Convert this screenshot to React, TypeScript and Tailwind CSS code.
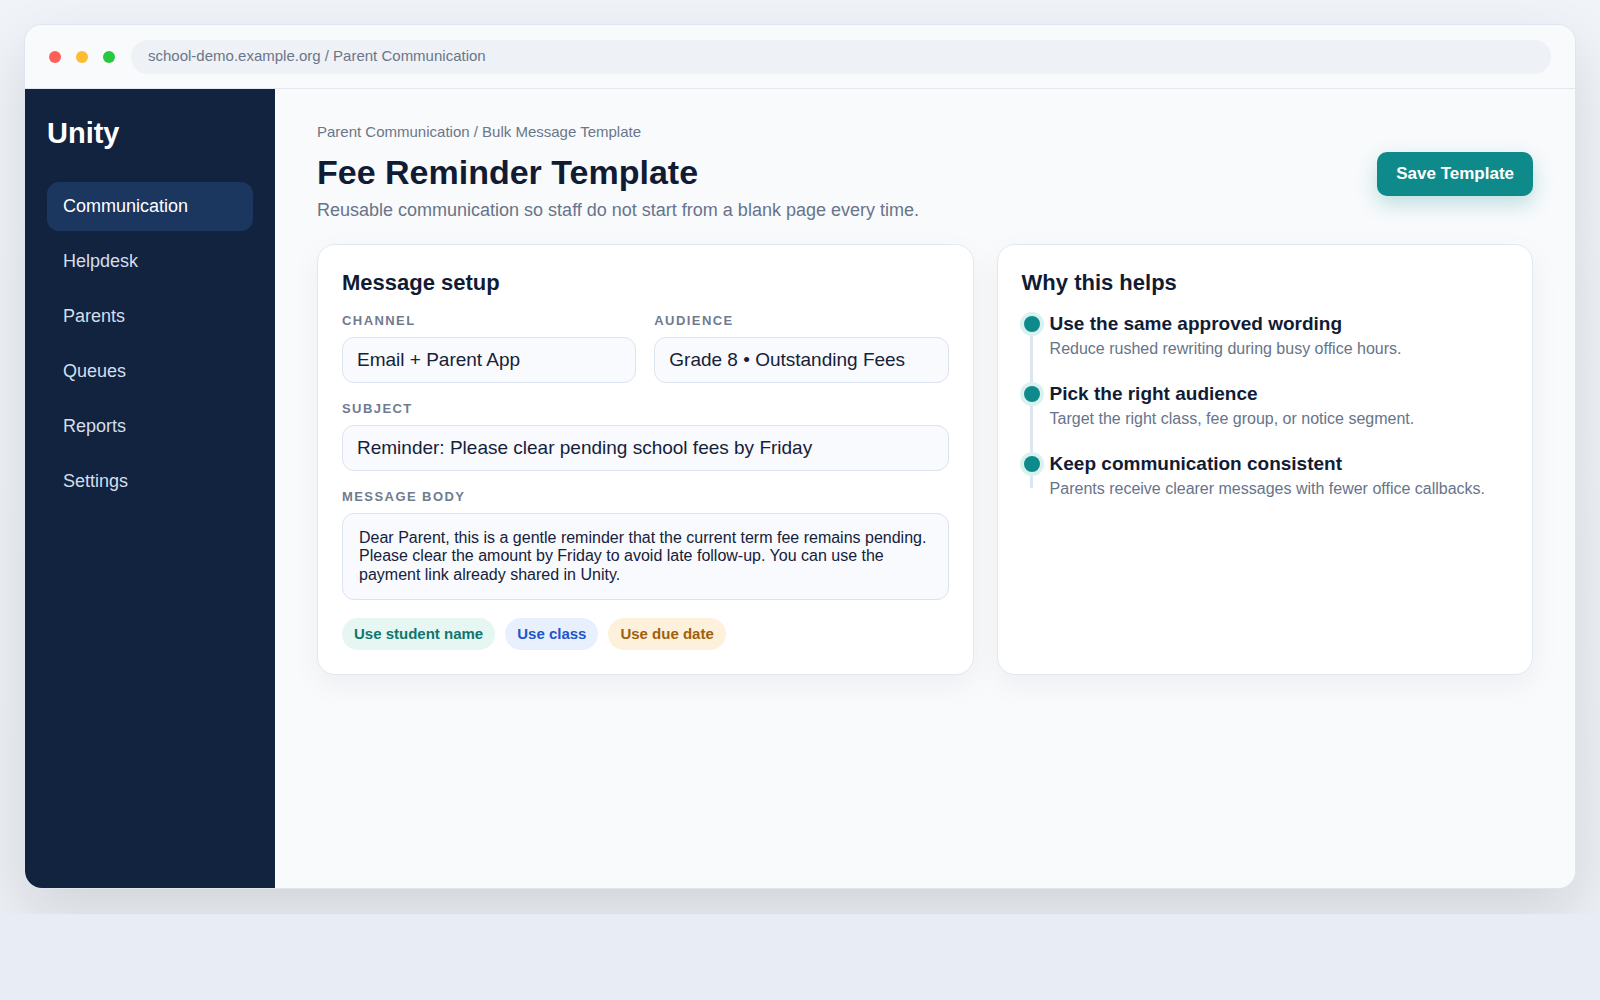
import React from "react";

const nav = ["Communication", "Helpdesk", "Parents", "Queues", "Reports", "Settings"];

const steps = [
  { t: "Use the same approved wording", d: "Reduce rushed rewriting during busy office hours." },
  { t: "Pick the right audience", d: "Target the right class, fee group, or notice segment." },
  { t: "Keep communication consistent", d: "Parents receive clearer messages with fewer office callbacks." },
];

function Label({ children }: { children: React.ReactNode }) {
  return (
    <div className="text-[13px] leading-[16px] font-bold uppercase tracking-[0.11em] text-[#6f7c90] mb-2">
      {children}
    </div>
  );
}

function Field({ children }: { children: React.ReactNode }) {
  return (
    <div className="h-[46px] flex items-center px-[14px] rounded-[12px] border border-[#dbe3ee] bg-[#f8fafd] text-[19px] text-[#16213a]">
      {children}
    </div>
  );
}

export default function App() {
  return (
    <div className="min-h-screen bg-[#e8ecf4]" style={{ fontFamily: '"Liberation Sans", Arial, sans-serif' }}>
      <div className="h-[914px] overflow-hidden p-6 bg-gradient-to-b from-[#f0f3f7] to-[#eceff3]">
        <div className="h-[865px] flex flex-col rounded-[18px] border border-[#dfe5ee] bg-[#f8fafc] overflow-hidden shadow-[0_24px_60px_rgba(15,23,42,0.12)]">
          {/* top bar */}
          <div className="h-[64px] shrink-0 flex items-center px-6 border-b border-[#e2e8f0] bg-[#f8fafc]">
            <div className="flex items-center gap-[15px]">
              <span className="w-3 h-3 rounded-full bg-[#ff5f57]" />
              <span className="w-3 h-3 rounded-full bg-[#febc2e]" />
              <span className="w-3 h-3 rounded-full bg-[#28c840]" />
            </div>
            <div className="ml-4 flex-1 h-[34px] rounded-full bg-[#eef1f6] flex items-center px-[17px] text-[15px] text-[#6b7689]">
              school-demo.example.org / Parent Communication
            </div>
          </div>
          <div className="flex flex-1 min-h-0">
            {/* sidebar */}
            <aside className="w-[250px] shrink-0 bg-[#11233f] px-[22px] pt-[26px]">
              <div className="text-[29px] leading-[36px] font-bold text-white">Unity</div>
              <nav className="mt-[31px] flex flex-col gap-[6px]">
                {nav.map((n, i) => (
                  <div
                    key={n}
                    className={
                      i === 0
                        ? "h-[49px] flex items-center px-4 rounded-[12px] bg-[#1b375f] text-[18px] text-white"
                        : "h-[49px] flex items-center px-4 rounded-[12px] text-[18px] text-[#d5deeb]"
                    }
                  >
                    {n}
                  </div>
                ))}
              </nav>
            </aside>
            {/* main */}
            <main className="flex-1 bg-[#f8fafc] pl-[42px] pr-[42px] pt-[33px]">
              <div className="flex items-start justify-between">
                <div>
                  <div className="text-[15px] leading-[20px] text-[#6b7689]">Parent Communication / Bulk Message Template</div>
                  <h1 className="mt-[10px] text-[34px] leading-[40px] font-bold text-[#111c34]">Fee Reminder Template</h1>
                  <p className="mt-[5px] text-[18px] leading-[26px] text-[#67748a]">
                    Reusable communication so staff do not start from a blank page every time.
                  </p>
                </div>
                <button className="mt-[30px] h-[44px] px-[19px] rounded-[10px] bg-[#0f8a8a] text-white text-[17px] font-bold shadow-[0_8px_20px_rgba(15,138,138,0.25)]">
                  Save Template
                </button>
              </div>

              <div className="mt-[21px] grid grid-cols-[minmax(0,1.224fr)_minmax(0,1fr)] gap-[23px]">
                {/* left card */}
                <section className="rounded-[18px] border border-[#e2e8f0] bg-white p-6 shadow-[0_10px_30px_rgba(15,23,42,0.05)]">
                  <h2 className="text-[22px] leading-[28px] font-bold text-[#111c34]">Message setup</h2>
                  <div className="mt-4 grid grid-cols-2 gap-[18px]">
                    <div>
                      <Label>Channel</Label>
                      <Field>Email + Parent App</Field>
                    </div>
                    <div>
                      <Label>Audience</Label>
                      <Field>Grade 8 • Outstanding Fees</Field>
                    </div>
                  </div>
                  <div className="mt-[18px]">
                    <Label>Subject</Label>
                    <Field>Reminder: Please clear pending school fees by Friday</Field>
                  </div>
                  <div className="mt-[18px]">
                    <Label>Message body</Label>
                    <div className="rounded-[12px] border border-[#dbe3ee] bg-[#f8fafd] p-[15px] pl-4 text-[16px] leading-[18.4px] text-[#16213a]">
                      Dear Parent, this is a gentle reminder that the current term fee remains pending. Please clear the amount by Friday to avoid late follow-up. You can use the payment link already shared in Unity.
                    </div>
                  </div>
                  <div className="mt-[18px] flex gap-[10px]">
                    <span className="h-[32px] flex items-center px-3 rounded-full bg-[#e6f6f2] text-[15px] font-bold text-[#0f766e]">Use student name</span>
                    <span className="h-[32px] flex items-center px-3 rounded-full bg-[#e8f0fe] text-[15px] font-bold text-[#2155c9]">Use class</span>
                    <span className="h-[32px] flex items-center px-3 rounded-full bg-[#fdf1dc] text-[15px] font-bold text-[#a2600a]">Use due date</span>
                  </div>
                </section>

                {/* right card */}
                <section className="rounded-[18px] border border-[#e2e8f0] bg-white p-6 shadow-[0_10px_30px_rgba(15,23,42,0.05)]">
                  <h2 className="text-[22px] leading-[28px] font-bold text-[#111c34]">Why this helps</h2>
                  <div className="relative mt-[15px] flex flex-col gap-[22px]">
                    <div className="absolute left-[8px] top-[12px] bottom-[12px] w-[3px] bg-[#dde5ee]" />
                    {steps.map((s) => (
                      <div key={s.t} className="relative pl-[28px]">
                        <span className="absolute left-[2px] top-[4px] w-4 h-4 rounded-full bg-[#0f8a8a] shadow-[0_0_0_4px_#d9f2f0]" />
                        <div className="text-[19px] leading-[24px] font-bold text-[#111c34]">{s.t}</div>
                        <div className="mt-[2px] text-[16px] leading-[22px] text-[#67748a]">{s.d}</div>
                      </div>
                    ))}
                  </div>
                </section>
              </div>
            </main>
          </div>
        </div>
      </div>
    </div>
  );
}
